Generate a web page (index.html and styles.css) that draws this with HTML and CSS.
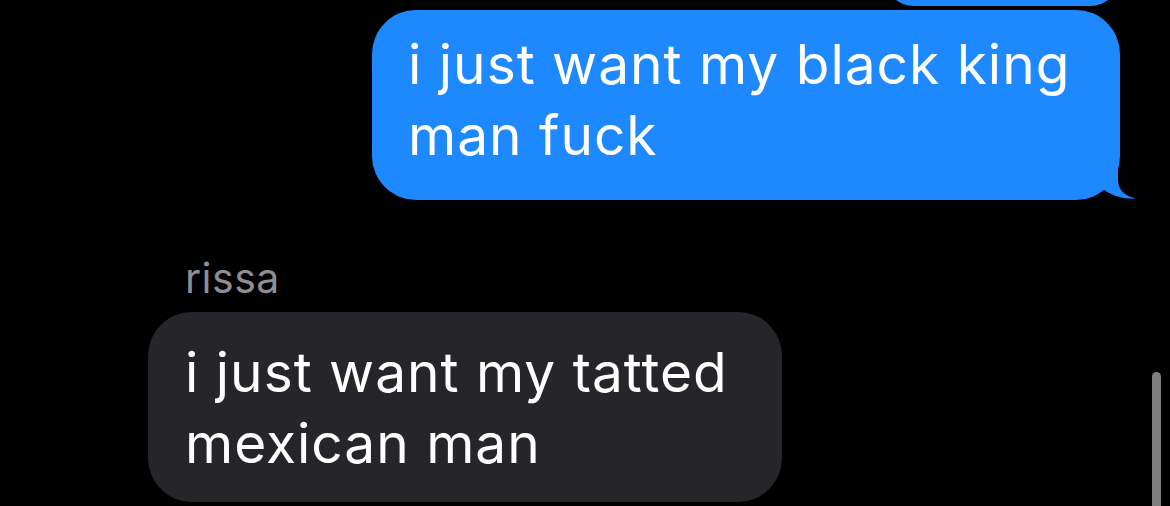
FILE: index.html
```html
<!DOCTYPE html>
<html lang="en">
<head>
    <meta charset="UTF-8">
    <meta name="viewport" content="width=device-width, initial-scale=1.0">
    <title>Messages</title>
    <link rel="stylesheet" href="styles.css">
</head>
<body>
  <div class="thread">
    <div class="msg sent prev"></div>

    <div class="msg sent last">
      i just want my black king<br>man fuck
      <svg class="tail" width="70" height="41" viewBox="0 0 70 41">
        <path d="M50 0 L50 22 Q51 36 68 39.5 Q48 41 32 28 Q20 40 0 40 L0 0 Z" fill="#1e89fe"/>
      </svg>
    </div>

    <div class="sender">rissa</div>
    <div class="msg received">
      i just want my tatted<br>mexican man
    </div>
  </div>

  <div class="scrollbar"></div>
</body>
</html>
```

FILE: styles.css
```css
body {
  margin: 0;
  background-color: #000;
  font-family: 'Inter', 'Roboto', sans-serif;
  height: 100vh;
  overflow: hidden;
  position: relative;
}

.thread {
  display: flex;
  flex-direction: column;
}

.msg {
  font-size: 55px;
  line-height: 71px;
  letter-spacing: 1px;
  color: #fff;
  border-radius: 44px;
  box-sizing: border-box;
  position: relative;
}

.sent {
  background-color: #1e89fe;
  align-self: flex-end;
  margin-right: 50px;
}

.prev {
  width: 236px;
  height: 60px;
  margin-top: -54px;
}

.last {
  width: 748px;
  height: 190px;
  margin-top: 4px;
  padding: 19px 36px 0;
}

.tail {
  position: absolute;
  right: -18px;
  bottom: 0;
  display: block;
}

.sender {
  margin: 53px 0 0 185px;
  font-size: 41px;
  line-height: 50px;
  letter-spacing: 0.5px;
  color: #8e8e93;
}

.received {
  background-color: #26252a;
  align-self: flex-start;
  margin: 9px 0 0 148px;
  width: 634px;
  height: 190px;
  padding: 25px 37px 0;
}

.scrollbar {
  position: absolute;
  right: 9px;
  top: 372px;
  width: 9px;
  height: 134px;
  border-radius: 5px 5px 0 0;
  background-color: #7f7f7f;
}
```
